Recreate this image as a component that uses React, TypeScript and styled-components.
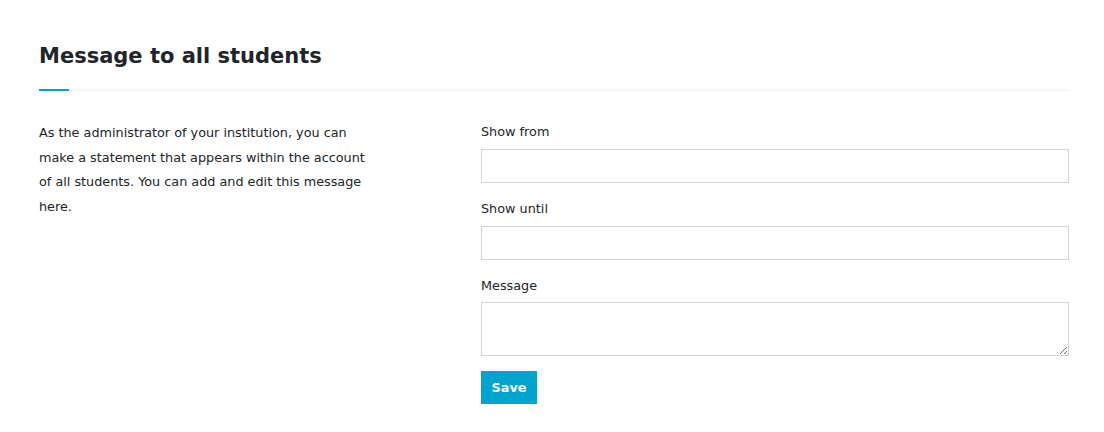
import React from "react";
import styled, { createGlobalStyle } from "styled-components";

const Global = createGlobalStyle`
  html, body { margin: 0; padding: 0; background: #fff; }
  body { font-family: "DejaVu Sans", Verdana, sans-serif; color: #212529; }
  * { box-sizing: border-box; }
`;

const Page = styled.div`
  padding: 41px 35px 0 39px;
  width: 1104px;
`;

const Title = styled.h1`
  margin: 0;
  font-size: 21px;
  font-weight: 700;
  line-height: 30px;
  color: #212529;
`;

const Divider = styled.div`
  margin-top: 18px;
  height: 2px;
  background: #f7f7f7;
  width: 1030px;
  position: relative;
  &::before {
    content: "";
    position: absolute;
    left: 0;
    top: 0;
    width: 30px;
    height: 2px;
    background: #00a5cf;
  }
`;

const Row = styled.div`
  display: grid;
  grid-template-columns: 442px 588px;
  margin-top: 30px;
`;

const Intro = styled.p`
  margin: 0;
  width: 340px;
  font-size: 12.8px;
  line-height: 24.5px;
  color: #212529;
`;

const Form = styled.form`
  display: flex;
  flex-direction: column;
`;

const Label = styled.label`
  display: block;
  font-size: 12.8px;
  line-height: 20px;
  padding-top: 1px;
  color: #212529;
  margin-bottom: 7px;
`;

const Field = styled.div`
  margin-bottom: 15px;
`;

const Input = styled.input`
  display: block;
  width: 100%;
  height: 34px;
  border: 1px solid #ced4da;
  border-radius: 0;
  padding: 6px 10px;
  font: inherit;
  font-size: 13px;
  outline: none;
`;

const TextArea = styled.textarea`
  display: block;
  width: 100%;
  height: 54px;
  margin-top: -1px;
  border: 1px solid #ced4da;
  border-radius: 0;
  padding: 6px 10px;
  font: inherit;
  font-size: 13px;
  resize: vertical;
  outline: none;
`;

const Button = styled.button`
  align-self: flex-start;
  width: 56px;
  height: 33px;
  border: none;
  border-radius: 0;
  background: #00a5cf;
  color: #fff;
  font-family: "DejaVu Sans", Verdana, sans-serif;
  font-weight: 700;
  font-size: 12.8px;
  cursor: pointer;
  margin-top: 0;
`;

export default function App() {
  return (
    <>
      <Global />
      <Page>
        <Title>Message to all students</Title>
        <Divider />
        <Row>
          <Intro>
            As the administrator of your institution, you can make a statement
            that appears within the account of all students. You can add and
            edit this message here.
          </Intro>
          <Form onSubmit={(e) => e.preventDefault()}>
            <Field>
              <Label htmlFor="from">Show from</Label>
              <Input id="from" type="text" />
            </Field>
            <Field>
              <Label htmlFor="until">Show until</Label>
              <Input id="until" type="text" />
            </Field>
            <Field>
              <Label htmlFor="msg">Message</Label>
              <TextArea id="msg" />
            </Field>
            <Button type="submit">Save</Button>
          </Form>
        </Row>
      </Page>
    </>
  );
}
